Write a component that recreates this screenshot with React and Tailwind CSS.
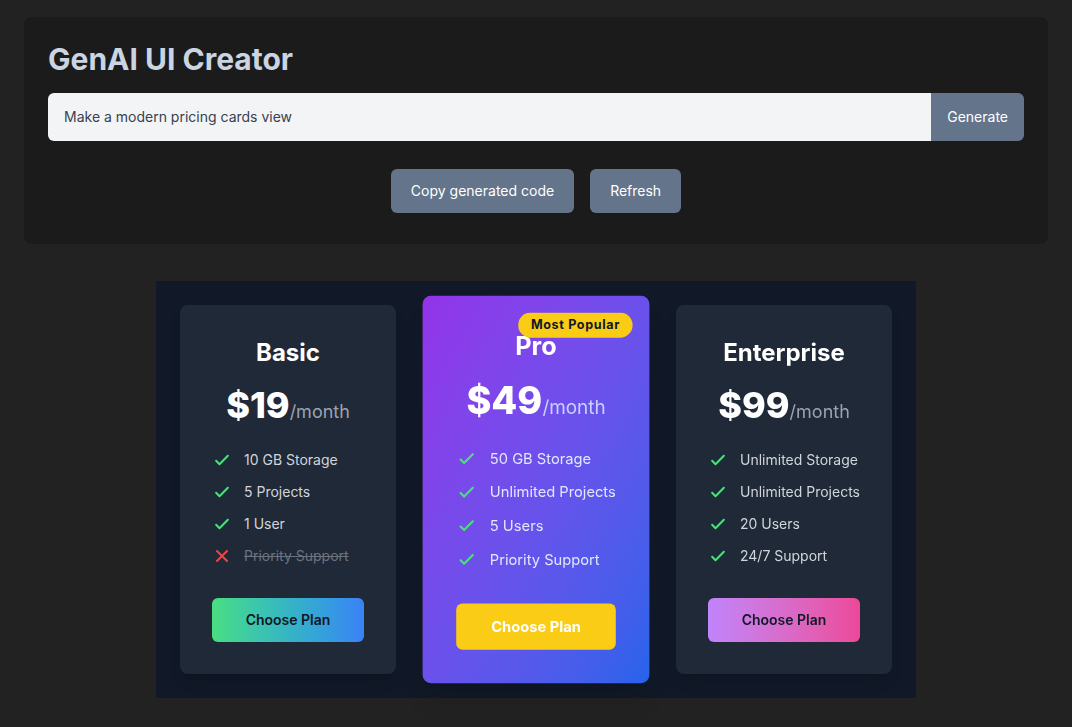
import React from 'react'

const plans = [
  {
    name: 'Basic',
    price: '$19',
    features: [
      { text: '10 GB Storage', ok: true },
      { text: '5 Projects', ok: true },
      { text: '1 User', ok: true },
      { text: 'Priority Support', ok: false },
    ],
    button: 'bg-gradient-to-r from-[#4ade80] to-[#3b82f6] text-[#111827] font-semibold',
  },
  {
    name: 'Pro',
    price: '$49',
    popular: true,
    features: [
      { text: '50 GB Storage', ok: true },
      { text: 'Unlimited Projects', ok: true },
      { text: '5 Users', ok: true },
      { text: 'Priority Support', ok: true },
    ],
    button: 'bg-[#facc15] text-white font-bold',
  },
  {
    name: 'Enterprise',
    price: '$99',
    features: [
      { text: 'Unlimited Storage', ok: true },
      { text: 'Unlimited Projects', ok: true },
      { text: '20 Users', ok: true },
      { text: '24/7 Support', ok: true },
    ],
    button: 'bg-gradient-to-r from-[#c084fc] to-[#ec4899] text-[#111827] font-semibold',
  },
]

function Check() {
  return (
    <svg viewBox="0 0 24 24" className="w-5 h-5 mr-3 text-[#4ade80] shrink-0" fill="none" stroke="currentColor" strokeWidth="2.5" strokeLinecap="round" strokeLinejoin="round">
      <path d="M5 13l4 4L19 7" />
    </svg>
  )
}

function Cross() {
  return (
    <svg viewBox="0 0 24 24" className="w-5 h-5 mr-3 text-[#ef4444] shrink-0" fill="none" stroke="currentColor" strokeWidth="2.5" strokeLinecap="round" strokeLinejoin="round">
      <path d="M6 18L18 6M6 6l12 12" />
    </svg>
  )
}

function PlanCard({ plan }) {
  const pro = plan.popular
  return (
    <div
      className={`relative w-[216px] rounded-lg p-8 shadow-lg ${
        pro ? 'bg-gradient-to-br from-[#9333ea] to-[#2563eb] scale-105 shadow-xl' : 'bg-[#1f2937]'
      }`}
    >
      {pro && (
        <span className="absolute top-4 right-4 bg-[#facc15] text-[#111827] text-xs font-bold tracking-wider px-3 py-1 rounded-full">
          Most Popular
        </span>
      )}
      <h3 className="text-2xl font-bold text-white text-center mb-4">{plan.name}</h3>
      <div className="text-center mb-6">
        <span className="text-4xl font-extrabold text-white">{plan.price}</span>
        <span className={`text-lg ${pro ? 'text-[#c7d2fe]' : 'text-[#9ca3af]'}`}>/month</span>
      </div>
      <ul className="space-y-3">
        {plan.features.map(f => (
          <li key={f.text} className="flex items-center text-sm">
            {f.ok ? <Check /> : <Cross />}
            <span className={f.ok ? (pro ? 'text-[#e0e7ff]' : 'text-[#d1d5db]') : 'text-[#6b7280] line-through'}>
              {f.text}
            </span>
          </li>
        ))}
      </ul>
      <button className={`mt-8 w-full h-11 rounded-md text-sm ${plan.button}`}>Choose Plan</button>
    </div>
  )
}

export default function App() {
  return (
    <div
      className="min-h-screen bg-[#222222] pt-[17px] pb-8"
      style={{ fontFamily: 'Inter, "Noto Sans", sans-serif' }}
    >
      {/* Generator panel */}
      <div className="max-w-5xl mx-auto bg-[#1b1b1b] rounded-lg px-6 pt-6 pb-[31px]">
        <h1 className="text-3xl font-bold text-[#cbd5e1] mb-4">GenAI UI Creator</h1>
        <div className="flex h-12">
          <input
            className="flex-1 bg-[#f3f4f6] rounded-l-md pl-4 text-sm text-[#374151] outline-none"
            defaultValue="Make a modern pricing cards view"
          />
          <button className="bg-[#64748b] text-white text-sm px-4 rounded-r-md">Generate</button>
        </div>
        <div className="flex justify-center gap-4 mt-7">
          <button className="bg-[#64748b] text-white text-sm px-5 h-11 rounded-md">Copy generated code</button>
          <button className="bg-[#64748b] text-white text-sm px-5 h-11 rounded-md">Refresh</button>
        </div>
      </div>

      {/* Generated preview */}
      <div className="w-[760px] mx-auto mt-[37px] bg-[#111827] p-6 flex gap-8">
        {plans.map(p => (
          <PlanCard key={p.name} plan={p} />
        ))}
      </div>
    </div>
  )
}
